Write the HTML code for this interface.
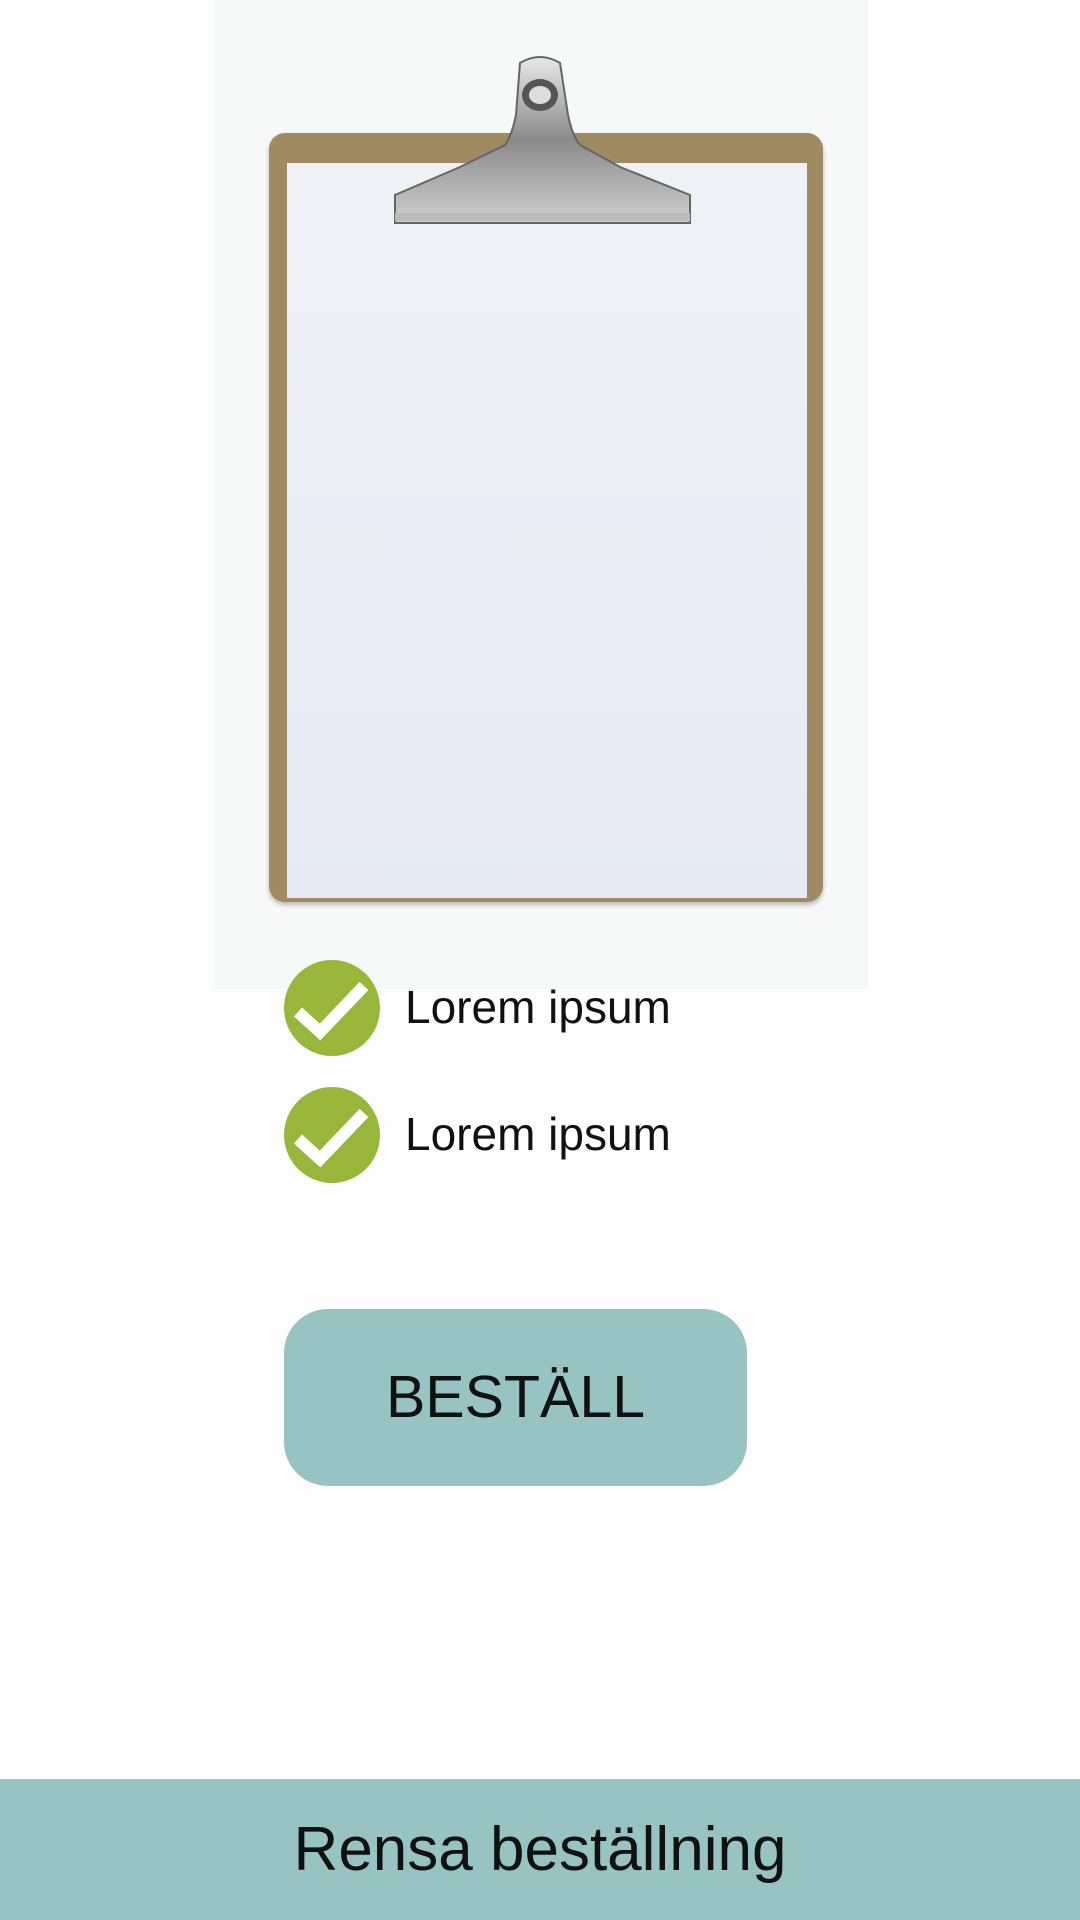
<!DOCTYPE html>
<html><head><meta charset="utf-8"><style>
html,body{margin:0;padding:0;}
body{width:1080px;height:1920px;background:#fdfdfd;position:relative;overflow:hidden;font-family:"Liberation Sans",sans-serif;color:#111;}
.img{position:absolute;left:213px;top:0;width:655px;height:989px;background:#f7f8f8;}
.board{position:absolute;left:269px;top:133px;width:554px;height:769px;background:#a08a62;border-radius:16px;box-shadow:0 3px 5px rgba(0,0,0,.25);}
.paper{position:absolute;left:287px;top:163px;width:520px;height:735px;background:linear-gradient(#f0f1f7,#e6e9f4);}
.chk{position:absolute;left:284px;width:96px;height:96px;border-radius:50%;background:#98b73a;}
.chk svg{position:absolute;left:0;top:0;}
.li{position:absolute;left:405px;font-size:46px;font-weight:300;color:#111;}
.btn{position:absolute;left:284px;top:1309px;width:463px;height:177px;border-radius:44px;background:#97c3c3;text-align:center;line-height:177px;font-size:59px;color:#111;}
.bar{position:absolute;left:0;top:1779px;width:1080px;height:141px;background:#97c3c3;text-align:center;line-height:141px;font-size:62px;color:#111;}
</style></head><body>
<div class="img"></div>
<div class="board"></div>
<div class="paper"></div>
<svg style="position:absolute;left:390px;top:55px" width="310" height="175" viewBox="0 0 310 175">
<defs><linearGradient id="m" x1="0" y1="0" x2="0" y2="1"><stop offset="0" stop-color="#e8e8e8"/><stop offset=".5" stop-color="#8a8a8a"/><stop offset="1" stop-color="#d0d0d0"/></linearGradient></defs>
<path d="M130 8 Q150 -4 170 8 L178 60 Q182 80 190 90 L230 112 L300 140 L300 168 L5 168 L5 140 L70 112 L115 90 Q122 80 126 60 Z" fill="url(#m)" stroke="#666" stroke-width="2"/>
<ellipse cx="150" cy="40" rx="18" ry="16" fill="#555"/>
<ellipse cx="150" cy="40" rx="11" ry="9" fill="#ddd"/>
<rect x="5" y="158" width="295" height="8" fill="#bbb"/>
</svg>
<div class="chk" style="top:960px"><svg width="96" height="96"><path d="M14 52 L36 72 L80 26" fill="none" stroke="#fff" stroke-width="12"/></svg></div>
<div class="li" style="top:980px">Lorem ipsum</div>
<div class="chk" style="top:1087px"><svg width="96" height="96"><path d="M14 52 L36 72 L80 26" fill="none" stroke="#fff" stroke-width="12"/></svg></div>
<div class="li" style="top:1107px">Lorem ipsum</div>
<div class="btn">BESTÄLL</div>
<div class="bar">Rensa beställning</div>
</body></html>
